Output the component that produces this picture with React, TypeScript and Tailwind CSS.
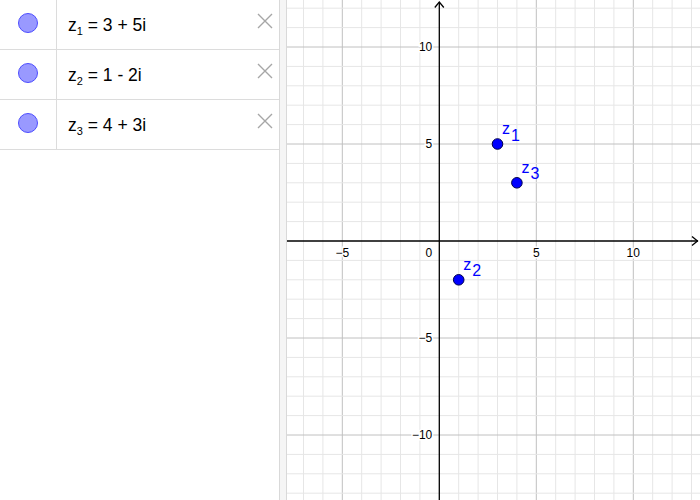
import React from "react";

const SCALE = 19.4;
const OX = 152.3; // local origin x in graphics svg
const OY = 241;
const W = 413;
const H = 500;

function Graph() {
  const vLines: React.ReactNode[] = [];
  for (let k = -8; k <= 14; k++) {
    const x = OX + SCALE * k;
    if (x < 0 || x > W) continue;
    if (k === 0) continue;
    const major = k % 5 === 0;
    vLines.push(
      <line key={"v" + k} x1={x} y1={0} x2={x} y2={H} stroke={major ? "#c0c0c0" : "#e6e6e6"} strokeWidth={1} />
    );
  }
  const hLines: React.ReactNode[] = [];
  for (let k = -14; k <= 13; k++) {
    const y = OY - SCALE * k;
    if (y < 0 || y > H) continue;
    if (k === 0) continue;
    const major = k % 5 === 0;
    hLines.push(
      <line key={"h" + k} x1={0} y1={y} x2={W} y2={y} stroke={major ? "#c0c0c0" : "#e6e6e6"} strokeWidth={1} />
    );
  }
  const pts = [
    { x: 3, y: 5, sub: "1" },
    { x: 1, y: -2, sub: "2" },
    { x: 4, y: 3, sub: "3" },
  ];
  const labelProps = {
    fontFamily: "'Liberation Sans', Arial, sans-serif",
    fontSize: 12,
    fill: "#000",
    stroke: "#fff",
    strokeWidth: 3,
    paintOrder: "stroke" as const,
  };
  return (
    <svg width={W} height={H} viewBox={`0 0 ${W} ${H}`} className="block">
      {vLines}
      {hLines}
      {/* axes */}
      <line x1={0} y1={OY} x2={W - 2} y2={OY} stroke="#000" strokeWidth={1.3} />
      <line x1={OX} y1={2} x2={OX} y2={H} stroke="#000" strokeWidth={1.3} />
      <polyline points={`${W - 8},${OY - 4.5} ${W - 2.5},${OY} ${W - 8},${OY + 4.5}`} fill="none" stroke="#000" strokeWidth={1.3} />
      <polyline points={`${OX - 4.5},${7.5} ${OX},${2} ${OX + 4.5},${7.5}`} fill="none" stroke="#000" strokeWidth={1.3} />
      {/* x labels */}
      <text {...labelProps} x={OX - 5 * SCALE} y={OY + 16} textAnchor="middle">−5</text>
      <text {...labelProps} x={OX + 5 * SCALE} y={OY + 16} textAnchor="middle">5</text>
      <text {...labelProps} x={OX + 10 * SCALE} y={OY + 16} textAnchor="middle">10</text>
      <text {...labelProps} x={OX - 7} y={OY + 16} textAnchor="end">0</text>
      {/* y labels */}
      <text {...labelProps} x={OX - 7} y={OY - 10 * SCALE + 4} textAnchor="end">10</text>
      <text {...labelProps} x={OX - 7} y={OY - 5 * SCALE + 4} textAnchor="end">5</text>
      <text {...labelProps} x={OX - 7} y={OY + 5 * SCALE + 4} textAnchor="end">−5</text>
      <text {...labelProps} x={OX - 7} y={OY + 10 * SCALE + 4} textAnchor="end">−10</text>
      {/* points */}
      {pts.map((p) => {
        const cx = OX + p.x * SCALE;
        const cy = OY - p.y * SCALE;
        return (
          <g key={p.sub}>
            <circle cx={cx} cy={cy} r={5.3} fill="#0000ff" stroke="#00004d" strokeWidth={1} />
            <text
              x={cx + 4.5}
              y={cy - 10}
              fontFamily="'Liberation Sans', Arial, sans-serif"
              fontSize={16}
              fill="#0000ff"
            >
              z
              <tspan dx={1} dy={6.5}>{p.sub}</tspan>
            </text>
          </g>
        );
      })}
    </svg>
  );
}

function Row({ sub, expr }: { sub: string; expr: string }) {
  return (
    <div className="flex h-[50px] border-b border-[#dcdcdc]">
      <div className="w-[57px] shrink-0 border-r border-[#dcdcdc] relative">
        <div className="absolute left-[18px] top-[13px] w-[20px] h-[20px] rounded-full bg-[#9999ff] border border-[#4d4dff]" />
      </div>
      <div className="flex-1 relative">
        <div
          className="absolute left-[11px] top-[15px] text-[17.5px] leading-[20px] text-black"
          style={{ fontFamily: "'Liberation Sans', Arial, sans-serif" }}
        >
          z<span className="text-[11px] relative top-[4px]">{sub}</span> = {expr}
        </div>
        <svg className="absolute left-[200px] top-[13px]" width="16" height="16" viewBox="0 0 16 16">
          <path d="M1 1 L15 15 M15 1 L1 15" stroke="#a6a6a6" strokeWidth="1.4" fill="none" />
        </svg>
      </div>
    </div>
  );
}

export default function App() {
  return (
    <div className="w-[700px] h-[500px] flex bg-white overflow-hidden">
      <div className="w-[279px] shrink-0 bg-white">
        <Row sub="1" expr="3 + 5i" />
        <Row sub="2" expr="1 - 2i" />
        <Row sub="3" expr="4 + 3i" />
      </div>
      <div className="w-[8px] shrink-0 bg-[#f5f5f5] border-l border-r border-[#d9d9d9]" />
      <div className="flex-1 relative">
        <Graph />
      </div>
    </div>
  );
}
